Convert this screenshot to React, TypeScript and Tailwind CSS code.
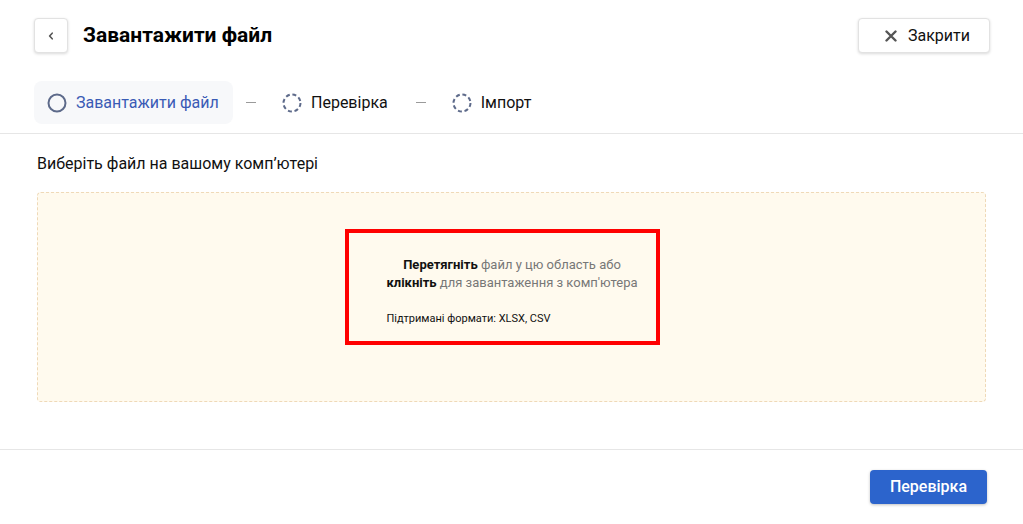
import React from "react";

function SolidCircle() {
  return (
    <svg width="20" height="20" viewBox="0 0 20 20">
      <circle cx="10" cy="10" r="8.5" fill="none" stroke="#5d6a8a" strokeWidth="2" />
    </svg>
  );
}

function DashedCircle() {
  return (
    <svg width="20" height="20" viewBox="0 0 20 20">
      <circle cx="10" cy="10" r="8.5" fill="none" stroke="#5d6a8a" strokeWidth="2" strokeDasharray="4 2.7" />
    </svg>
  );
}

export default function App() {
  return (
    <div className="w-[1023px] h-[524px] bg-white flex flex-col" style={{ fontFamily: "Roboto, 'Noto Sans', sans-serif" }}>
      <div className="flex items-center justify-between pl-[34px] pr-[33px] pt-[18px]">
        <div className="flex items-center gap-[15px]">
          <button className="w-[34px] h-[35px] rounded-[4px] border border-[#e2e2e2] bg-white shadow-[0_1px_3px_rgba(0,0,0,0.15)] flex items-center justify-center text-[#555]">
            <svg width="10" height="10" viewBox="0 0 10 10">
              <path d="M6.2 2.2 L3.6 5 L6.2 7.8" fill="none" stroke="#555" strokeWidth="1.6" strokeLinecap="round" strokeLinejoin="round" />
            </svg>
          </button>
          <h1 className="text-[21px] font-bold text-black leading-none">Завантажити файл</h1>
        </div>
        <button className="w-[132px] h-[35px] rounded-[4px] border border-[#e2e2e2] bg-white shadow-[0_1px_3px_rgba(0,0,0,0.15)] flex items-center pl-[26px] gap-[11px] text-[16px] text-[#111]">
          <svg width="12" height="12" viewBox="0 0 12 12">
            <path d="M1.5 1.5 L10.5 10.5 M10.5 1.5 L1.5 10.5" stroke="#555" strokeWidth="2.4" strokeLinecap="round" />
          </svg>
          <span>Закрити</span>
        </button>
      </div>

      <div className="flex items-center pl-[34px] mt-[28px] h-[43px]">
        <div className="h-[43px] w-[199px] rounded-[8px] bg-[#f7f8fa] flex items-center pl-[13px] gap-[9px]">
          <SolidCircle />
          <span className="text-[16px] text-[#3a5bb5]">Завантажити файл</span>
        </div>
        <div className="w-[10px] h-px bg-[#9a9a9a] ml-[13px]" />
        <div className="flex items-center gap-[9px] ml-[26px]">
          <DashedCircle />
          <span className="text-[16px] text-[#111]">Перевірка</span>
        </div>
        <div className="w-[10px] h-px bg-[#9a9a9a] ml-[28px]" />
        <div className="flex items-center gap-[9px] ml-[26px]">
          <DashedCircle />
          <span className="text-[16px] text-[#111]">Імпорт</span>
        </div>
      </div>

      <div className="h-px bg-[#e6e6e6] mt-[9px]" />

      <div className="px-[37px] pt-[19px]">
        <p className="text-[16px] text-[#111] leading-[22px]">Виберіть файл на вашому комп’ютері</p>
        <div className="mt-[17px] h-[210px] rounded-[4px] border border-dashed border-[#efd9b8] bg-[#fffaee] flex justify-center pt-[36px]">
          <div className="w-[315px] h-[116px] border-4 border-[#ff0000] flex justify-center pl-[20px] pt-[23px] ml-[-19px]">
            <div className="flex flex-col items-start">
              <p className="text-[13px] leading-[18px] text-[#777] text-center">
                <span className="font-bold text-[#111]">Перетягніть</span> файл у цю область або
                <br />
                <span className="font-bold text-[#111]">клікніть</span> для завантаження з комп'ютера
              </p>
              <p className="text-[11px] text-[#111] mt-[19px]">Підтримані формати: XLSX, CSV</p>
            </div>
          </div>
        </div>
      </div>

      <div className="h-px bg-[#e6e6e6] mt-[47px]" />

      <div className="flex justify-end pr-[36px] pt-[20px]">
        <button className="w-[117px] h-[34px] rounded-[4px] bg-[#2c64cc] text-white text-[16px] font-medium shadow-[0_1px_3px_rgba(0,0,0,0.25)]">
          Перевірка
        </button>
      </div>
    </div>
  );
}
